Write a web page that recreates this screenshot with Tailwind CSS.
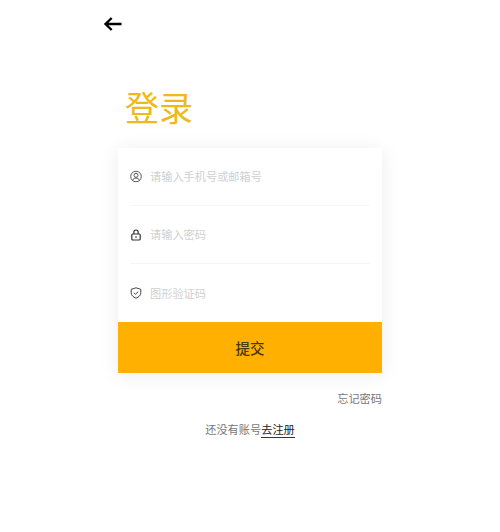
<!DOCTYPE html>
<html><head><meta charset="utf-8">
<script src="https://cdn.jsdelivr.net/npm/@tailwindcss/browser@4"></script>
</head>
<body class="bg-white">
<div class="w-[500px] h-[532px] overflow-hidden flex flex-col items-center font-['Noto_Sans_CJK_SC','Noto_Sans',sans-serif]">
  <div class="w-[264px]">
    <div class="h-[36px] pt-[15px] -ml-[15.500px]">
      <svg width="20" height="18" viewBox="0 0 20 18" fill="none" stroke="#000" stroke-width="2.400"><path d="M18.500 9H2.500M8.700 3L2.500 9l6.200 6"/></svg>
    </div>
    <h1 class="mt-[50px] ml-[7px] h-[62px] text-[34px] leading-[42px] font-normal text-[#efb91d]">登录</h1>
    <div class="shadow-[0_2px_18px_rgba(0,0,0,0.08)] bg-white">
      <div class="px-[12px]">
        <div class="h-[58px] flex items-center border-b border-[#f6f6f6] gap-[8px]">
          <svg class="-translate-y-[0.5px]" width="12" height="12" viewBox="0 0 12 12" fill="none" stroke="#555" stroke-width="1"><circle cx="6" cy="6" r="5.300"/><circle cx="6" cy="4.800" r="2"/><path d="M2.500 10c.6-1.700 2-2.400 3.500-2.400s2.900.7 3.500 2.400"/></svg>
          <span class="-mt-[1px] text-[11.200px] leading-[16px] text-[#d0d0d0]">请输入手机号或邮箱号</span>
        </div>
        <div class="h-[58px] flex items-center border-b border-[#f6f6f6] gap-[8px]">
          <svg width="12" height="12" viewBox="0 0 12 12" fill="none" stroke="#333" stroke-width="1.200"><rect x="1.800" y="5" width="8.400" height="6" rx="1"/><path d="M3.800 5V3.200a2.200 2.200 0 0 1 4.400 0V5"/><path d="M5 8h2"/></svg>
          <span class="-mt-[1px] text-[11.200px] leading-[16px] text-[#d0d0d0]">请输入密码</span>
        </div>
        <div class="h-[58px] flex items-center gap-[8px]">
          <svg width="12" height="12" viewBox="0 0 12 12" fill="none" stroke="#444" stroke-width="1"><path d="M6 .8l4.800 1.500v3.400c0 2.800-2.300 4.600-4.800 5.500-2.500-.9-4.800-2.700-4.800-5.500V2.300z"/><path d="M3.800 5.800L5.400 7.300 8.200 4.600"/></svg>
          <span class="text-[11.200px] leading-[16px] text-[#d0d0d0]">图形验证码</span>
        </div>
      </div>
      <div class="h-[51px] bg-[#ffb000] flex items-center justify-center text-[14.500px] font-medium text-[#4a3608]">提交</div>
    </div>
    <div class="mt-[16px] text-right text-[11.200px] leading-[18px] text-[#777]">忘记密码</div>
    <div class="mt-[15px] flex justify-center text-[11.200px] leading-[15px] text-[#777]">还没有账号<span class="text-[#222] border-b border-[#333]">去注册</span></div>
  </div>
</div>
</body></html>
